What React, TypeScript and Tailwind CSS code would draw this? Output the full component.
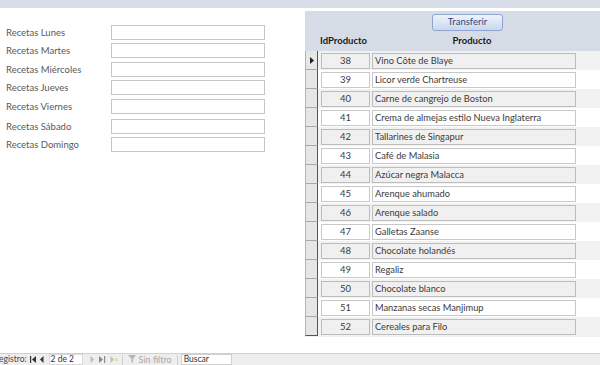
import React from "react";

const days = [
  { label: "Recetas Lunes", mt: "mt-[17px]" },
  { label: "Recetas Martes", mt: "mt-[3px]" },
  { label: "Recetas Miércoles", mt: "mt-[4px]" },
  { label: "Recetas Jueves", mt: "mt-[3px]" },
  { label: "Recetas Viernes", mt: "mt-[4px]" },
  { label: "Recetas Sábado", mt: "mt-[5px]" },
  { label: "Recetas Domingo", mt: "mt-[3px]" },
];

const rows: [number, string][] = [
  [38, "Vino Côte de Blaye"],
  [39, "Licor verde Chartreuse"],
  [40, "Carne de cangrejo de Boston"],
  [41, "Crema de almejas estilo Nueva Inglaterra"],
  [42, "Tallarines de Singapur"],
  [43, "Café de Malasia"],
  [44, "Azúcar negra Malacca"],
  [45, "Arenque ahumado"],
  [46, "Arenque salado"],
  [47, "Galletas Zaanse"],
  [48, "Chocolate holandés"],
  [49, "Regaliz"],
  [50, "Chocolate blanco"],
  [51, "Manzanas secas Manjimup"],
  [52, "Cereales para Filo"],
];

function Tri({ dir, color = "#333", bar = false, star = false }: { dir: "l" | "r"; color?: string; bar?: boolean; star?: boolean }) {
  const wide = bar || star;
  return (
    <svg width={wide ? 8 : 4} height="7" viewBox={wide ? "0 0 8 7" : "0 0 4 7"}>
      {dir === "l" ? (
        bar ? (
          <>
            <rect x="0" y="0" width="1.2" height="7" fill={color} />
            <path d="M6 0 L2 3.5 L6 7 Z" fill={color} />
          </>
        ) : (
          <path d="M3.5 0 L0 3.5 L3.5 7 Z" fill={color} />
        )
      ) : bar ? (
        <>
          <path d="M1 0 L5 3.5 L1 7 Z" fill={color} />
          <rect x="6" y="0" width="1.2" height="7" fill={color} />
        </>
      ) : star ? (
        <>
          <path d="M0.5 0 L4 3.5 L0.5 7 Z" fill={color} />
          <rect x="4.8" y="2" width="3" height="3" fill="#f1dd98" />
        </>
      ) : (
        <path d="M0.5 0 L4 3.5 L0.5 7 Z" fill={color} />
      )}
    </svg>
  );
}

export default function App() {
  return (
    <div
      className="relative w-[600px] h-[365px] overflow-hidden bg-white flex flex-col"
      style={{ fontFamily: "Lato, 'Open Sans', sans-serif" }}
    >
      <div className="h-[8px] shrink-0 bg-[#d8dee7]" />
      <div className="flex h-[345px] shrink-0">
        {/* Left form */}
        <div className="w-[305px] shrink-0 flex flex-col">
          {days.map((d) => (
            <div key={d.label} className={`flex items-center h-[15px] ${d.mt}`}>
              <div className="w-[111px] pl-[6px] text-[9.5px] text-[#595959] leading-none">{d.label}</div>
              <div className="w-[154px] h-[15px] border border-[#c6c6c6] bg-white" />
            </div>
          ))}
        </div>
        {/* Right subform */}
        <div className="flex-1 pt-[3px]">
          <div className="h-[326px] bg-[#f0f0f0] flex flex-col">
            <div className="h-[40px] bg-[#d6dce5] flex flex-col">
              <div className="flex justify-center pt-[3px] pl-[30px]">
                <div className="w-[71px] h-[17px] rounded-[3px] border border-[#8fa7cf] bg-gradient-to-b from-[#eef3fb] to-[#c9d8ef] flex items-center justify-center text-[9.5px] text-[#2b4a7a]">
                  Transferir
                </div>
              </div>
              <div className="flex mt-[5px] text-[9.5px] font-bold text-[#1a1a1a] leading-none">
                <div className="w-[65px] pl-[15px]">IdProducto</div>
                <div className="w-[204px] text-center">Producto</div>
              </div>
            </div>
            <div className="flex flex-col">
              {rows.map(([id, name], i) => {
                const alt = i % 2 === 0;
                return (
                  <div key={id} className={`flex h-[19px] ${alt ? "bg-[#f2f2f2]" : "bg-white"}`}>
                    <div
                      className={`w-[13px] h-[19px] shrink-0 bg-[#e6e6e6] border-l border-l-[#b5b5b5] border-r border-r-[#555] border-b ${
                        i === rows.length - 1 ? "border-b-[#555]" : "border-b-[#a9a9a9]"
                      } flex items-center justify-center`}
                    >
                      {i === 0 && (
                        <svg width="4" height="7" viewBox="0 0 4 7">
                          <path d="M0 0 L4 3.5 L0 7 Z" fill="#222" />
                        </svg>
                      )}
                    </div>
                    <div className="flex items-start pt-[2px] pl-[3px] gap-[2px]">
                      <div
                        className={`w-[49px] h-[16px] border ${
                          alt ? "border-[#bcbcbc] bg-[#f0f0f0]" : "border-[#c8c8c8] bg-white"
                        } text-center text-[9.5px] leading-[14px] text-[#3b3b3b]`}
                      >
                        {id}
                      </div>
                      <div
                        className={`w-[204px] h-[16px] border ${
                          alt ? "border-[#bcbcbc] bg-[#f0f0f0]" : "border-[#c8c8c8] bg-white"
                        } pl-[2px] text-[9.3px] leading-[14px] text-[#3b3b3b] whitespace-nowrap overflow-hidden`}
                      >
                        {name}
                      </div>
                    </div>
                  </div>
                );
              })}
            </div>
          </div>
        </div>
      </div>
      {/* Navigation bar */}
      <div className="h-[12px] shrink-0 border-t border-[#d0d0d0] bg-[#eeeeee] flex items-center text-[8.5px] leading-none">
        <span className="-ml-[6px] text-[#4a4a4a]">Registro:</span>
        <div className="ml-[3px] flex items-center gap-[2px]">
          <Tri dir="l" bar />
          <Tri dir="l" />
        </div>
        <div className="ml-[5px] w-[34px] h-[11px] bg-white border border-[#d8d8d8] flex items-center pl-[1px] text-[#333]">2 de 2</div>
        <div className="ml-[7px] flex items-center gap-[4px]">
          <Tri dir="r" color="#bdbdbd" />
          <Tri dir="r" bar color="#8a8a8a" />
          <Tri dir="r" star color="#bdbdbd" />
        </div>
        <div className="ml-[4px] w-px h-[10px] bg-[#cfcfcf]" />
        <svg className="ml-[5px]" width="9" height="9" viewBox="0 0 9 9">
          <path d="M0 0 H8 L5 4 V8 L3.5 7 V4 Z" fill="#b5b5b5" />
        </svg>
        <span className="ml-[2px] text-[9px] text-[#a8a8a8]">Sin filtro</span>
        <div className="ml-[5px] w-px h-[10px] bg-[#cfcfcf]" />
        <div className="ml-[3px] w-[51px] h-[11px] bg-white border border-[#d0d0d0] flex items-center pl-[2px] text-[#333]">Buscar</div>
      </div>
    </div>
  );
}
